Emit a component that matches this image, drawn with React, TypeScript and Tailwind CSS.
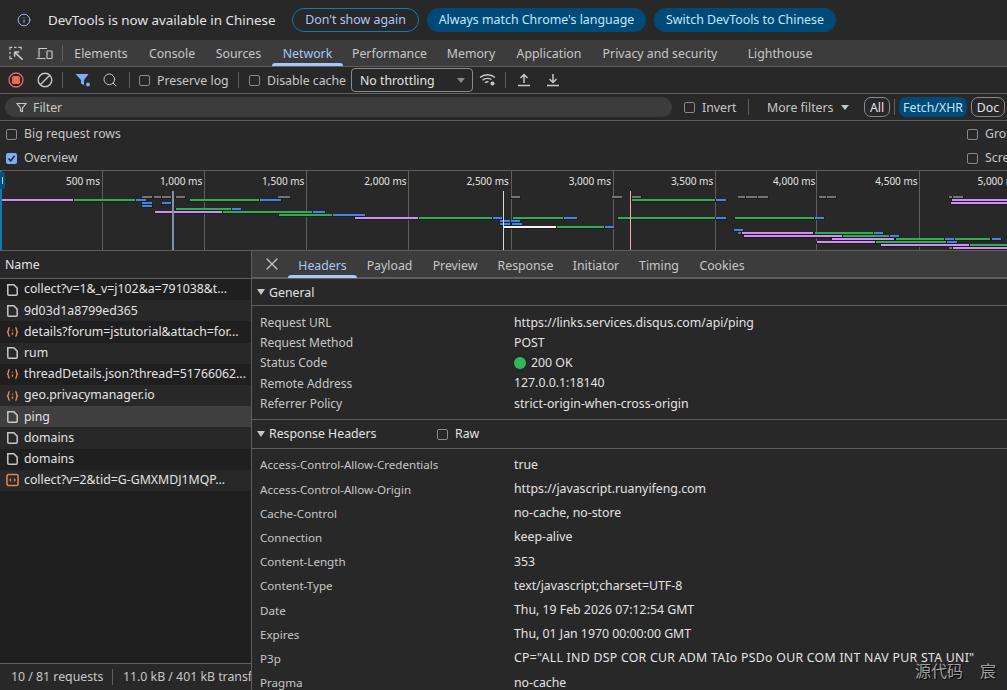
import { Info, Search, X } from 'lucide-react';

const font = { fontFamily: '"Noto Sans", sans-serif' };

type Bar = [number, number, number, string];
const P = '#d08df5';
const G = '#2fae55';
const B = '#4285e8';
const K = '#747474';
const W = '#f5f5f5';

// x1, x2, row, colour of every request bar in the overview
const bars: Bar[] = [
  [142, 152, 0, K], [154, 161, 0, K], [162, 171, 0, K], [176, 185, 0, K], [278, 290, 0, K],
  [511, 520, 0, K], [612, 622, 0, K], [632, 641, 0, K], [738, 745, 0, K], [746, 757, 0, K],
  [758, 768, 0, K], [819, 826, 0, K], [827, 836, 0, K], [949, 952, 0, K], [953, 963, 0, K],
  [2, 73, 1, P], [74, 135, 1, G], [136, 146, 1, B], [190, 259, 1, G], [260, 281, 1, B],
  [632, 715, 1, G], [716, 726, 1, B], [952, 1007, 1, P],
  [142, 152, 2, B], [162, 171, 2, B], [951, 1007, 2, P],
  [142, 152, 3, B],
  [176, 231, 4, G], [232, 241, 4, B],
  [155, 222, 5, P], [223, 312, 5, G], [313, 325, 5, B],
  [279, 332, 6, G], [333, 365, 6, B],
  [355, 418, 7, P], [419, 492, 7, G], [493, 502, 7, B], [513, 563, 7, G], [564, 577, 7, B],
  [618, 715, 7, G], [716, 726, 7, B], [735, 814, 7, G], [815, 824, 7, B],
  [500, 510, 8, B], [511, 520, 8, B],
  [500, 510, 9, B], [512, 522, 9, B],
  [504, 556, 10, W], [557, 604, 10, G], [605, 614, 10, B],
  [734, 743, 11, B],
  [738, 741, 12, K], [742, 813, 12, P], [815, 873, 12, G], [874, 883, 12, B],
  [744, 842, 13, P], [843, 889, 13, G], [890, 899, 13, B],
  [832, 894, 14, P], [896, 944, 14, G], [945, 954, 14, B], [955, 990, 14, G], [992, 1001, 14, B],
  [817, 875, 15, P], [876, 946, 15, G], [947, 957, 15, B],
  [881, 969, 16, P], [970, 1007, 16, G],
  [949, 952, 17, K], [953, 1007, 17, P],
];

const gridLines = [102, 204, 306, 408, 511, 613, 715, 816, 919];
const labels = ['500 ms', '1,000 ms', '1,500 ms', '2,000 ms', '2,500 ms', '3,000 ms', '3,500 ms', '4,000 ms', '4,500 ms', '5,000 ms'];

const mainTabs = [
  ['Elements', 'w-[76px]'], ['Console', 'w-[66px]'], ['Sources', 'w-[67px]'], ['Network', 'w-[71px]'],
  ['Performance', 'w-[93px]'], ['Memory', 'w-[70px]'], ['Application', 'w-[86px]'],
  ['Privacy and security', 'w-[136px]'], ['Lighthouse', 'w-[104px]'],
];
const detailTabs = [
  ['Headers', 'w-[69px]'], ['Payload', 'w-[65px]'], ['Preview', 'w-[66px]'], ['Response', 'w-[75px]'],
  ['Initiator', 'w-[66px]'], ['Timing', 'w-[60px]'], ['Cookies', 'w-[66px]'],
];

const requests: [string, 'doc' | 'script' | 'wasm'][] = [
  ['collect?v=1&_v=j102&a=791038&t...', 'doc'],
  ['9d03d1a8799ed365', 'doc'],
  ['details?forum=jstutorial&attach=for...', 'script'],
  ['rum', 'doc'],
  ['threadDetails.json?thread=51766062...', 'script'],
  ['geo.privacymanager.io', 'script'],
  ['ping', 'doc'],
  ['domains', 'doc'],
  ['domains', 'doc'],
  ['collect?v=2&tid=G-GMXMDJ1MQP...', 'wasm'],
];

const general = [
  ['Request URL', 'https://links.services.disqus.com/api/ping'],
  ['Request Method', 'POST'],
  ['Status Code', '200 OK'],
  ['Remote Address', '127.0.0.1:18140'],
  ['Referrer Policy', 'strict-origin-when-cross-origin'],
];

const responseHeaders = [
  ['Access-Control-Allow-Credentials', 'true'],
  ['Access-Control-Allow-Origin', 'https://javascript.ruanyifeng.com'],
  ['Cache-Control', 'no-cache, no-store'],
  ['Connection', 'keep-alive'],
  ['Content-Length', '353'],
  ['Content-Type', 'text/javascript;charset=UTF-8'],
  ['Date', 'Thu, 19 Feb 2026 07:12:54 GMT'],
  ['Expires', 'Thu, 01 Jan 1970 00:00:00 GMT'],
  ['P3p', 'CP="ALL IND DSP COR CUR ADM TAIo PSDo OUR COM INT NAV PUR STA UNI"'],
  ['Pragma', 'no-cache'],
];

function Check({ checked, label, className, labelClass }: { checked?: boolean; label: string; className?: string; labelClass?: string }) {
  return (
    <div className={`flex shrink-0 items-center gap-[7px] whitespace-nowrap ${className ?? ''}`}>
      {checked ? (
        <span className="flex h-[11px] w-[11px] shrink-0 items-center justify-center rounded-[2px] bg-[#7cacf8]">
          <svg width="9" height="9" viewBox="0 0 9 9" fill="none" stroke="#202124" strokeWidth="1.5">
            <path d="M1.5 4.5 3.7 6.8 7.6 2" />
          </svg>
        </span>
      ) : (
        <span className="h-[11px] w-[11px] shrink-0 rounded-[2px] border border-[#8a8a8a]" />
      )}
      <span className={labelClass}>{label}</span>
    </div>
  );
}

function Sep({ className }: { className?: string }) {
  return <span className={`h-4 w-px shrink-0 bg-[#5e5e5e] ${className ?? ''}`} />;
}

function FileIcon({ kind }: { kind: 'doc' | 'script' | 'wasm' }) {
  if (kind === 'doc') {
    return (
      <svg width="13" height="14" viewBox="0 0 13 14" fill="none" stroke="#c7c7c7" strokeWidth="1.5" className="shrink-0">
        <path d="M1.8 1.7h6l3.4 3.4v6.2a1 1 0 0 1-1 1H2.8a1 1 0 0 1-1-1z" />
      </svg>
    );
  }
  if (kind === 'script') {
    return (
      <svg width="13" height="14" viewBox="0 0 13 14" fill="none" stroke="#e2855a" strokeWidth="1.4" className="shrink-0">
        <path d="M3.6 2.5C2 3 2.6 5.5 2.2 6.2 1.9 6.8 1 7 1 7s.9.2 1.2.8c.4.7-.2 3.2 1.4 3.7" />
        <path d="M9.4 2.5c1.6.5 1 3 1.4 3.7.3.6 1.2.8 1.2.8s-.9.2-1.2.8c-.4.7.2 3.2-1.4 3.7" />
        <path d="M6.5 4.8v1M6.5 7.6v1.2l-.6.9" />
      </svg>
    );
  }
  return (
    <svg width="13" height="14" viewBox="0 0 13 14" fill="none" stroke="#e2855a" strokeWidth="1.5" className="shrink-0">
      <rect x="1" y="1.5" width="11" height="11" rx="1.5" />
      <path d="M5 5.5 3.8 7 5 8.5M8 5.5 9.2 7 8 8.5" strokeWidth="1.2" />
    </svg>
  );
}

function Overview() {
  return (
    <div className="relative h-[81px] shrink-0 overflow-hidden border-y border-[#5e5e5e]">
      <svg width="1007" height="79" viewBox="0 171 1007 79" className="absolute left-0 top-0">
        {gridLines.map((x) => (
          <rect key={x} x={x} y="171" width="1" height="79" fill="#5e5e5e" />
        ))}
        {bars.map(([x1, x2, row, color], i) => (
          <g key={i}>
            <rect x={x1 - 1} y={196 + row * 3} width={x2 - x1 + 2} height="3" fill="#1e1e1e" />
            <rect x={x1} y={196 + row * 3} width={x2 - x1} height="2" fill={color} />
          </g>
        ))}
        <rect x="172" y="191" width="2" height="59" fill="#7d8fb3" />
        <rect x="503" y="191" width="1" height="59" fill="#d8d8d8" />
        <rect x="630" y="191" width="1" height="59" fill="#f4a9a4" />
        <rect x="0" y="171" width="2" height="79" fill="#0b7cb8" />
      </svg>
      <span className="absolute left-0 top-[1px] flex h-[17px] w-[5px] items-center justify-center rounded-r-[2px] bg-[#00527f]">
        <span className="h-[7px] w-px bg-[#c7c7c7]" />
      </span>
      {labels.map((label, i) => (
        <span
          key={label}
          className="absolute top-[2px] w-[80px] whitespace-nowrap text-right text-[10px] leading-[16px] text-[#e3e3e3]"
          style={{ left: 20 + i * 102.2 }}
        >
          {label}
        </span>
      ))}
    </div>
  );
}

export default function App() {
  return (
    <div className="relative flex h-[690px] w-[1007px] flex-col overflow-hidden bg-[#282828] text-[12.3px] text-[#c7c7c7]" style={font}>
      {/* Language infobar */}
      <div className="flex h-10 shrink-0 items-center whitespace-nowrap pl-[17px]">
        <Info size={14} color="#a8c7fa" strokeWidth={1.5} />
        <span className="ml-[17px] w-[228px] text-[13.4px] text-[#e3e3e3]">DevTools is now available in Chinese</span>
        <span className="ml-4 flex h-6 w-[127px] items-center justify-center rounded-full border border-[#0b7cb8] text-[12.4px] text-[#a8c7fa]">Don't show again</span>
        <span className="ml-2 flex h-6 w-[219px] items-center justify-center rounded-full bg-[#004a77] text-[12.4px] text-[#c2e7ff]">Always match Chrome's language</span>
        <span className="ml-2 flex h-6 w-[182px] items-center justify-center rounded-full bg-[#004a77] text-[12.4px] text-[#c2e7ff]">Switch DevTools to Chinese</span>
      </div>

      {/* Main tabs */}
      <div className="flex h-[27px] shrink-0 items-center border-b border-[#5e5e5e] bg-[#3c3c3c]">
        <div className="flex w-[63px] shrink-0 items-center pl-[9px]">
          <svg width="16" height="15" viewBox="0 0 16 15" fill="none" stroke="#c7c7c7" strokeWidth="1.2">
            <path d="M1 3.5V1h2.5M5.500 1H8M10 1h3v2.500M1 5.500V8M1 10v3h2.500" />
            <path d="M6 6h5M6 6v5M6 6l8.500 8" strokeWidth="1.6" />
          </svg>
          <svg width="17" height="13" viewBox="0 0 17 13" fill="none" stroke="#c7c7c7" strokeWidth="1.2" className="ml-[12px] shrink-0">
            <path d="M3 10.500V1.500h8M0.500 11.500h9" />
            <rect x="11" y="4" width="5" height="7.5" rx="0.8" />
          </svg>
          <Sep className="ml-[9px]" />
        </div>
        {mainTabs.map(([name, width]) => (
          <div key={name} className={`relative flex h-full shrink-0 items-center justify-center whitespace-nowrap pt-[3px] ${width} ${name === 'Network' ? 'text-[#a8c7fa]' : ''}`}>
            {name}
            {name === 'Network' && <span className="absolute bottom-0 left-0 right-0 h-[3px] rounded-t-[3px] bg-[#a8c7fa]" />}
          </div>
        ))}
      </div>

      {/* Network toolbar */}
      <div className="flex h-[27px] shrink-0 items-center whitespace-nowrap border-b border-[#5e5e5e]">
        <svg width="16" height="16" viewBox="0 0 16 16" className="ml-[8px] shrink-0">
          <circle cx="8" cy="8" r="7" fill="none" stroke="#e46962" strokeWidth="1.3" />
          <rect x="4" y="4" width="8" height="8" rx="1.5" fill="#e46962" />
        </svg>
        <svg width="16" height="16" viewBox="0 0 16 16" fill="none" stroke="#c7c7c7" strokeWidth="1.4" className="ml-[13px] shrink-0">
          <circle cx="8" cy="8" r="6.8" />
          <path d="M12.8 3.200 3.200 12.800" />
        </svg>
        <Sep className="ml-[9px]" />
        <svg width="16" height="14" viewBox="0 0 16 14" className="ml-[12px] shrink-0">
          <path d="M0.5 1h13L9 7v5L6 10.500V7z" fill="#7cacf8" />
          <circle cx="13" cy="11.5" r="2" fill="#7cacf8" />
        </svg>
        <Search size={16} color="#c7c7c7" strokeWidth={1.5} className="ml-[11px] shrink-0" />
        <Sep className="ml-[11px]" />
        <Check label="Preserve log" className="ml-[9px] w-[99px]" labelClass="pt-[2px]" />
        <Sep />
        <Check label="Disable cache" className="ml-[10px] w-[102px]" labelClass="pt-[2px]" />
        <div className="flex h-[24px] w-[122px] shrink-0 items-center justify-between rounded-[4px] border border-[#8a8a8a] pl-2 pr-[4px] pt-[2px] text-[#e3e3e3]">
          No throttling
          <svg width="10" height="6" viewBox="0 0 10 6" className="mr-[2px]"><path d="M1 0h8L5 5z" fill="#8a8a8a" /></svg>
        </div>
        <svg width="18" height="14" viewBox="0 0 18 14" fill="none" stroke="#c7c7c7" strokeWidth="1.3" className="ml-[6px] shrink-0">
          <path d="M1 4.500C5 .8 12 .8 16 4.500M3.500 7.200C6 5 10 4.800 12.500 6.500M6 9.800c1.300-1 2.500-1.200 3.500-.9" />
          <circle cx="13.5" cy="10.5" r="2" fill="#c7c7c7" stroke="none" />
        </svg>
        <Sep className="ml-[8px]" />
        <svg width="14" height="14" viewBox="0 0 14 14" fill="none" stroke="#c7c7c7" strokeWidth="1.5" className="ml-[11px] shrink-0">
          <path d="M7 10V2M3.500 5 7 1.500 10.500 5M1 12.500h12" />
        </svg>
        <svg width="14" height="14" viewBox="0 0 14 14" fill="none" stroke="#c7c7c7" strokeWidth="1.5" className="ml-[15px] shrink-0">
          <path d="M7 1v8M3.500 6 7 9.500 10.500 6M1 12.500h12" />
        </svg>
      </div>

      {/* Filter bar */}
      <div className="flex h-[27px] shrink-0 items-center whitespace-nowrap border-b border-[#5e5e5e]">
        <div className="ml-[5px] flex h-5 w-[667px] shrink-0 items-center rounded-full bg-[#3c3c3c] pl-[11px]">
          <svg width="11" height="11" viewBox="0 0 11 11" fill="none" stroke="#c7c7c7" strokeWidth="1.2">
            <path d="M1 1.500h9L6.500 6v3.500L4.500 9V6z" />
          </svg>
          <span className="ml-[6px] pt-[2px] text-[#c7c7c7]">Filter</span>
        </div>
        <Check label="Invert" className="ml-[12px] w-[64px]" labelClass="pt-[2px]" />
        <Sep />
        <span className="ml-[18px] w-[71px] pt-[2px]">More filters</span>
        <svg width="8" height="5" viewBox="0 0 8 5" className="ml-[3px] shrink-0"><path d="M0 0h8L4 5z" fill="#c7c7c7" /></svg>
        <span className="ml-[15px] flex h-5 w-[26px] shrink-0 items-center justify-center rounded-[7px] border border-[#8a8a8a] pt-[2px] text-[#e3e3e3]">All</span>
        <Sep className="ml-[4px]" />
        <span className="ml-[4px] flex h-5 w-[68px] shrink-0 items-center justify-center rounded-[7px] bg-[#004a77] pt-[2px] text-[#c2e7ff]">Fetch/XHR</span>
        <span className="ml-[4px] flex h-5 w-[34px] shrink-0 items-center justify-center rounded-[7px] border border-[#8a8a8a] pt-[2px] text-[#e3e3e3]">Doc</span>
      </div>

      {/* Settings */}
      <div className="flex h-[49px] shrink-0 justify-between overflow-hidden whitespace-nowrap pl-[6px] pt-[4px]">
        <div className="flex flex-col gap-[6px]">
          <Check label="Big request rows" className="h-[18px]" />
          <Check checked label="Overview" className="h-[18px]" />
        </div>
        <div className="flex w-[40px] shrink-0 flex-col gap-[6px]">
          <Check label="Group by frame" className="h-[18px]" />
          <Check label="Screenshots" className="h-[18px]" />
        </div>
      </div>

      <Overview />

      {/* Requests and details */}
      <div className="flex min-h-0 flex-1">
        <div className="flex w-[251px] shrink-0 flex-col bg-[#1f1f1f]">
          <div className="flex h-[28px] shrink-0 items-center border-b border-[#5e5e5e] bg-[#282828] pl-[5px] pt-[2px] text-[#e3e3e3]">Name</div>
          <div className="flex-1">
            {requests.map(([name, kind], i) => (
              <div
                key={i}
                className={`flex h-[21.2px] items-center gap-[5px] overflow-hidden whitespace-nowrap pl-[6px] text-[#e3e3e3] ${i === 6 ? 'bg-[#3f3f3f]' : i % 2 === 1 ? 'bg-[#282828]' : 'bg-[#1f1f1f]'}`}
              >
                <FileIcon kind={kind} />
                {name}
              </div>
            ))}
          </div>
          <div className="flex h-[27px] shrink-0 items-center overflow-hidden whitespace-nowrap border-t border-[#5e5e5e] bg-[#282828] pl-[11px]">
            <span className="w-[92px] shrink-0">10 / 81 requests</span>
            <Sep className="ml-[9px]" />
            <span className="ml-[10px]">11.0 kB / 401 kB transferred</span>
          </div>
        </div>

        <div className="flex min-w-0 flex-1 flex-col overflow-hidden border-l border-[#5e5e5e]">
          <div className="flex h-[28px] shrink-0 items-center border-b-2 border-[#5e5e5e] bg-[#3c3c3c] pl-[10px]">
            <X size={20} color="#c7c7c7" strokeWidth={1.5} className="shrink-0" />
            <div className="ml-[6px] flex h-full">
              {detailTabs.map(([name, width]) => (
                <div key={name} className={`relative flex h-full shrink-0 items-center justify-center whitespace-nowrap pt-[5px] ${width} ${name === 'Headers' ? 'text-[#a8c7fa]' : ''}`}>
                  {name}
                  {name === 'Headers' && <span className="absolute -bottom-[1px] left-0 right-0 h-[3px] rounded-t-[3px] bg-[#a8c7fa]" />}
                </div>
              ))}
            </div>
          </div>

          <div className="flex h-[27px] shrink-0 items-center gap-[3px] border-b border-[#5e5e5e] pl-[5px] text-[#e3e3e3]">
            <svg width="9" height="6" viewBox="0 0 9 6"><path d="M0 0h8L4 6z" fill="#c7c7c7" /></svg>
            <span className="pt-[2px]">General</span>
          </div>
          <div className="flex h-[114px] shrink-0 flex-col border-b border-[#5e5e5e] pl-[8px] pt-[7px]">
            {general.map(([key, value]) => (
              <div key={key} className="flex h-[20.2px] items-center whitespace-nowrap">
                <span className="w-[254px] shrink-0 text-[12px] text-[#c7c7c7]">{key}</span>
                <span className="flex items-center gap-[5px] text-[#e3e3e3]">
                  {key === 'Status Code' && <span className="h-3 w-3 rounded-full bg-[#2fb95c]" />}
                  {value}
                </span>
              </div>
            ))}
          </div>

          <div className="flex h-[29px] shrink-0 items-center gap-[3px] border-b border-[#5e5e5e] pl-[5px] text-[#e3e3e3]">
            <svg width="9" height="6" viewBox="0 0 9 6"><path d="M0 0h8L4 6z" fill="#c7c7c7" /></svg>
            <span className="w-[165px]">Response Headers</span>
            <Check label="Raw" />
          </div>
          <div className="flex shrink-0 flex-col pl-[8px] pt-[4px]">
            {responseHeaders.map(([key, value]) => (
              <div key={key} className="flex h-[24.2px] items-center whitespace-nowrap">
                <span className="w-[254px] shrink-0 text-[11.6px] text-[#c7c7c7]">{key}</span>
                <span className={`text-[#e3e3e3] ${key === 'P3p' ? 'tracking-[0.28px]' : ''}`}>{value}</span>
              </div>
            ))}
          </div>
        </div>
      </div>

      {/* Video watermark */}
      <div className="absolute bottom-[10px] left-[915px] flex gap-[17px] text-[16px] leading-[20px] text-[#a0a0a0] [text-shadow:1px_1px_1px_#000]" style={{ fontFamily: '"Noto Sans CJK SC", sans-serif' }}>
        <span>源代码</span>
        <span>宸</span>
      </div>
    </div>
  );
}
